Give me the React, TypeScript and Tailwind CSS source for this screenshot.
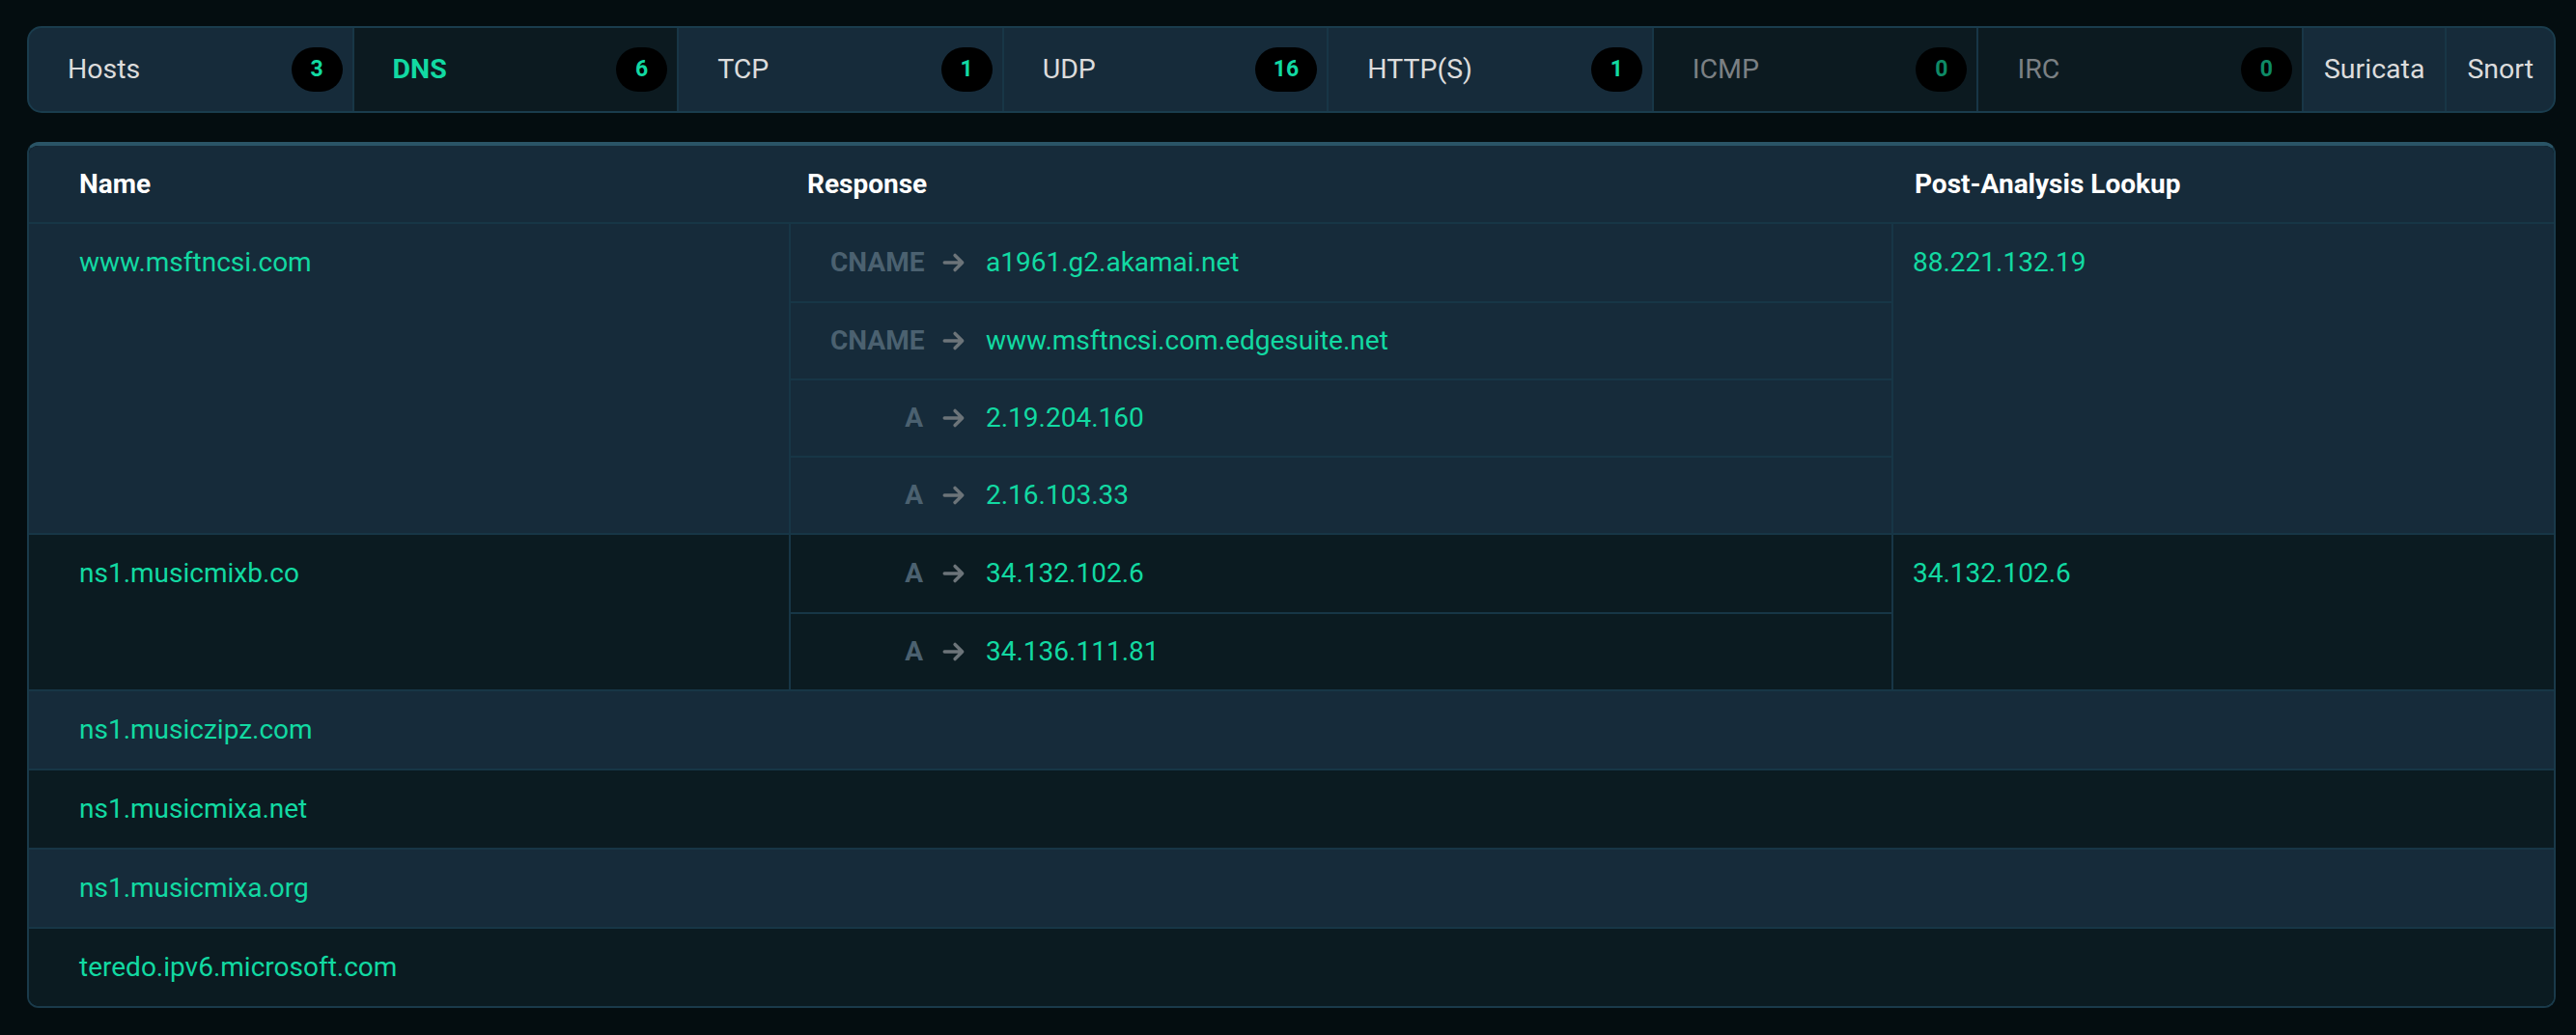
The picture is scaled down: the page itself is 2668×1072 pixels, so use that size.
import React from "react";

type Tab = { label: string; count?: number; active?: boolean; dim?: boolean };

const tabs: Tab[] = [
  { label: "Hosts", count: 3 },
  { label: "DNS", count: 6, active: true },
  { label: "TCP", count: 1 },
  { label: "UDP", count: 16 },
  { label: "HTTP(S)", count: 1 },
  { label: "ICMP", count: 0, dim: true },
  { label: "IRC", count: 0, dim: true },
];

type Answer = { type: string; value: string };
type Entry = { name: string; answers: Answer[]; lookup?: string };

const entries: Entry[] = [
  {
    name: "www.msftncsi.com",
    answers: [
      { type: "CNAME", value: "a1961.g2.akamai.net" },
      { type: "CNAME", value: "www.msftncsi.com.edgesuite.net" },
      { type: "A", value: "2.19.204.160" },
      { type: "A", value: "2.16.103.33" },
    ],
    lookup: "88.221.132.19",
  },
  {
    name: "ns1.musicmixb.co",
    answers: [
      { type: "A", value: "34.132.102.6" },
      { type: "A", value: "34.136.111.81" },
    ],
    lookup: "34.132.102.6",
  },
  { name: "ns1.musiczipz.com", answers: [] },
  { name: "ns1.musicmixa.net", answers: [] },
  { name: "ns1.musicmixa.org", answers: [] },
  { name: "teredo.ipv6.microsoft.com", answers: [] },
];

const TabBar: React.FC = () => (
  <div className="flex h-[90px] rounded-[15px] border-2 border-[#1a3c4d] bg-[#162b3a] overflow-hidden">
    {tabs.map((t, i) => (
      <div
        key={t.label}
        className={`flex-1 flex items-center justify-between pl-[40px] pr-[10px] ${
          i > 0 ? "border-l-2 border-[#183646]" : ""
        } ${t.active || t.dim ? "bg-[#0c1a20]" : ""}`}
      >
        <span
          className={`text-[28.5px] ${
            t.active
              ? "text-[#12d9a2] font-bold"
              : t.dim
              ? "text-[#7b8084]"
              : "text-[#dcdcdc]"
          }`}
        >
          {t.label}
        </span>
        <span
          className={`h-[46px] min-w-[53px] px-[19px] rounded-full bg-black flex items-center justify-center text-[23px] font-bold ${
            t.dim ? "text-[#0e8a66]" : "text-[#12d9a2]"
          }`}
        >
          {t.count}
        </span>
      </div>
    ))}
    <div className="flex items-center px-[21px] border-l-2 border-[#183646] text-[28.5px] text-[#dcdcdc]">
      Suricata
    </div>
    <div className="flex items-center px-[21px] border-l-2 border-[#183646] text-[28.5px] text-[#dcdcdc]">
      Snort
    </div>
  </div>
);

const DnsTable: React.FC = () => (
  <div className="mt-[30px] rounded-[12px] border-2 border-t-[4px] border-[#1a3a4a] border-t-[#2a5466] overflow-hidden text-[28px]">
    {/* header */}
    <div className="flex h-[81px] bg-[#162b3a] font-bold text-white border-b-2 border-[#173646]">
      <div className="w-[787px] pl-[52px] flex items-center">Name</div>
      <div className="w-[1144px] pl-[19px] flex items-center">Response</div>
      <div className="flex-1 pl-[22px] flex items-center">Post-Analysis Lookup</div>
    </div>
    {entries.map((e, i) => (
      <div
        key={e.name}
        className={`flex ${i > 0 ? "border-t-2 border-[#173646]" : ""} ${
          i % 2 === 0 ? "bg-[#162b3a]" : "bg-[#0b1b21]"
        }`}
      >
        <div
          className={`w-[787px] pl-[52px] text-[#12d9a2] leading-[40px] ${
            e.answers.length ? "pt-[20px]" : "py-[20px]"
          }`}
        >
          {e.name}
        </div>
        {e.answers.length > 0 && (
          <>
            <div className="w-[1144px] flex flex-col border-x-2 border-[#173646]">
              {e.answers.map((a, j) => (
                <div
                  key={j}
                  className={`h-[80px] flex items-center pl-[41px] ${
                    j > 0 ? "border-t-2 border-[#173646]" : ""
                  }`}
                >
                  <span className="w-[96px] text-right font-bold text-[#4b6170]">
                    {a.type}
                  </span>
                  <span className="ml-[19px] w-[26px] text-[#6c7479]">
                    <svg viewBox="0 0 24 24" className="w-[26px] h-[26px]" fill="none" stroke="currentColor" strokeWidth={3.2} strokeLinecap="round" strokeLinejoin="round">
                      <path d="M3 12h17M13 5l7 7-7 7" />
                    </svg>
                  </span>
                  <span className="ml-[20px] text-[#12d9a2]">{a.value}</span>
                </div>
              ))}
            </div>
            <div className="flex-1 pl-[20px] pt-[20px] leading-[40px] text-[#12d9a2]">
              {e.lookup}
            </div>
          </>
        )}
      </div>
    ))}
  </div>
);

export default function App() {
  return (
    <div
      className="min-h-screen bg-[#040d10] pl-[28px] pr-[21px] pt-[27px] pb-[29px]"
      style={{ fontFamily: "Roboto, 'Noto Sans', sans-serif" }}
    >
      <TabBar />
      <DnsTable />
    </div>
  );
}
